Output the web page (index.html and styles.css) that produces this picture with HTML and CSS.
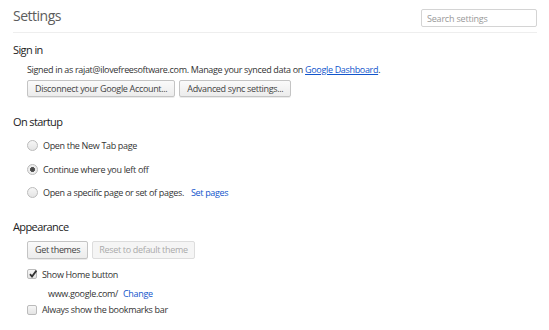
FILE: index.html
```html
<!DOCTYPE html>
<html lang="en">
<head>
    <meta charset="UTF-8">
    <title>Settings</title>
    <link rel="stylesheet" href="styles.css">
</head>
<body>
    <div class="page">
        <header class="topo">
            <h1>Settings</h1>
            <input type="text" class="busca" placeholder="Search settings">
        </header>

        <section class="secao">
            <h3>Sign in</h3>
            <div class="corpo">
                <p class="texto">Signed in as rajat@ilovefreesoftware.com. Manage your synced data on <a href="#" class="sublinhado">Google Dashboard</a>.</p>
                <div class="botoes">
                    <button>Disconnect your Google Account...</button>
                    <button>Advanced sync settings...</button>
                </div>
            </div>
        </section>

        <section class="secao">
            <h3>On startup</h3>
            <div class="corpo lista">
                <label class="opcao"><span class="radio"></span>Open the New Tab page</label>
                <label class="opcao"><span class="radio marcado"></span>Continue where you left off</label>
                <label class="opcao"><span class="radio"></span>Open a specific page or set of pages.<a href="#" class="link">Set pages</a></label>
            </div>
        </section>

        <section class="secao">
            <h3>Appearance</h3>
            <div class="corpo">
                <div class="botoes">
                    <button>Get themes</button>
                    <button disabled>Reset to default theme</button>
                </div>
                <label class="opcao caixa-linha">
                    <span class="caixa">
                        <svg width="10" height="10" viewBox="0 0 10 10"><path d="M2 5.2 L4 7.6 L8.4 1.6" fill="none" stroke="#333" stroke-width="1.8"/></svg>
                    </span>Show Home button
                </label>
                <div class="home">www.google.com/<a href="#" class="link">Change</a></div>
                <label class="opcao caixa-linha"><span class="caixa"></span>Always show the bookmarks bar</label>
            </div>
        </section>
    </div>
</body>
</html>
```

FILE: styles.css
```css
body {
    margin: 0;
    background-color: #fff;
    font-family: "Open Sans", "Noto Sans", sans-serif;
    font-size: 9px;
    letter-spacing: -0.33px;
    color: #333;
}

.page {
    padding: 0 12px 0 13px;
}

.topo {
    display: flex;
    justify-content: space-between;
    align-items: flex-end;
    height: 32px;
    border-bottom: 1px solid #eee;
}

h1 {
    margin: 0;
    align-self: center;
    font-size: 14px;
    font-weight: normal;
    letter-spacing: -0.5px;
    color: #5c5c5c;
    padding-bottom: 2px;
}

.busca {
    width: 116px;
    height: 18px;
    box-sizing: border-box;
    margin-bottom: 5px;
    padding: 0 5px;
    border: 1px solid #d4d4d4;
    border-radius: 2px;
    font-family: inherit;
    font-size: 9px;
    letter-spacing: -0.2px;
}

.busca::placeholder {
    color: #999;
}

.secao {
    margin-top: 17px;
}

.secao:first-of-type {
    margin-top: 9px;
}

.secao:last-of-type {
    margin-top: 14px;
}

h3 {
    margin: 0 0 7px;
    font-size: 11px;
    font-weight: normal;
    letter-spacing: -0.6px;
    color: #222;
}

.secao:first-of-type h3 {
    margin-bottom: 6px;
}

.corpo {
    padding-left: 14px;
}

.lista {
    margin-top: -2px;
}

.texto {
    margin: 0 0 4px;
}

.sublinhado {
    color: #15c;
}

.link {
    color: #15c;
    text-decoration: none;
    margin-left: 7px;
}

.home .link {
    margin-left: 5px;
}

.botoes {
    display: flex;
    gap: 4px;
}

button {
    height: 17px;
    padding: 0 7px;
    border: 1px solid #c4c4c4;
    border-radius: 2px;
    background: linear-gradient(#fafafa, #ececec);
    box-shadow: 0 1px 0 rgba(0, 0, 0, 0.08);
    font-family: inherit;
    font-size: 9px;
    letter-spacing: -0.33px;
    color: #444;
}

.secao:last-of-type button {
    height: 18px;
}

button:disabled {
    padding: 0 6px;
    color: #aaa;
    border-color: #ddd;
    background: #f5f5f5;
    box-shadow: none;
}

.opcao {
    display: flex;
    align-items: center;
    height: 23.5px;
}

.radio {
    width: 11px;
    height: 11px;
    box-sizing: border-box;
    border: 1px solid #bbb;
    border-radius: 50%;
    background: linear-gradient(#f6f6f6, #e4e4e4);
    margin-right: 5px;
}

.radio.marcado {
    background: radial-gradient(circle, #444 0, #555 2.2px, #ededed 2.8px);
}

.caixa {
    width: 10px;
    height: 10px;
    box-sizing: border-box;
    border: 1px solid #bbb;
    border-radius: 2px;
    background: linear-gradient(#f6f6f6, #e4e4e4);
    margin-right: 5px;
    position: relative;
}

.caixa svg {
    position: absolute;
    left: 0;
    top: -1px;
}

.caixa-linha {
    height: 15px;
}

.botoes + .caixa-linha {
    margin-top: 8px;
}

.home {
    padding-left: 21px;
    height: 18px;
    margin-top: 2.5px;
    display: flex;
    align-items: center;
}
```
